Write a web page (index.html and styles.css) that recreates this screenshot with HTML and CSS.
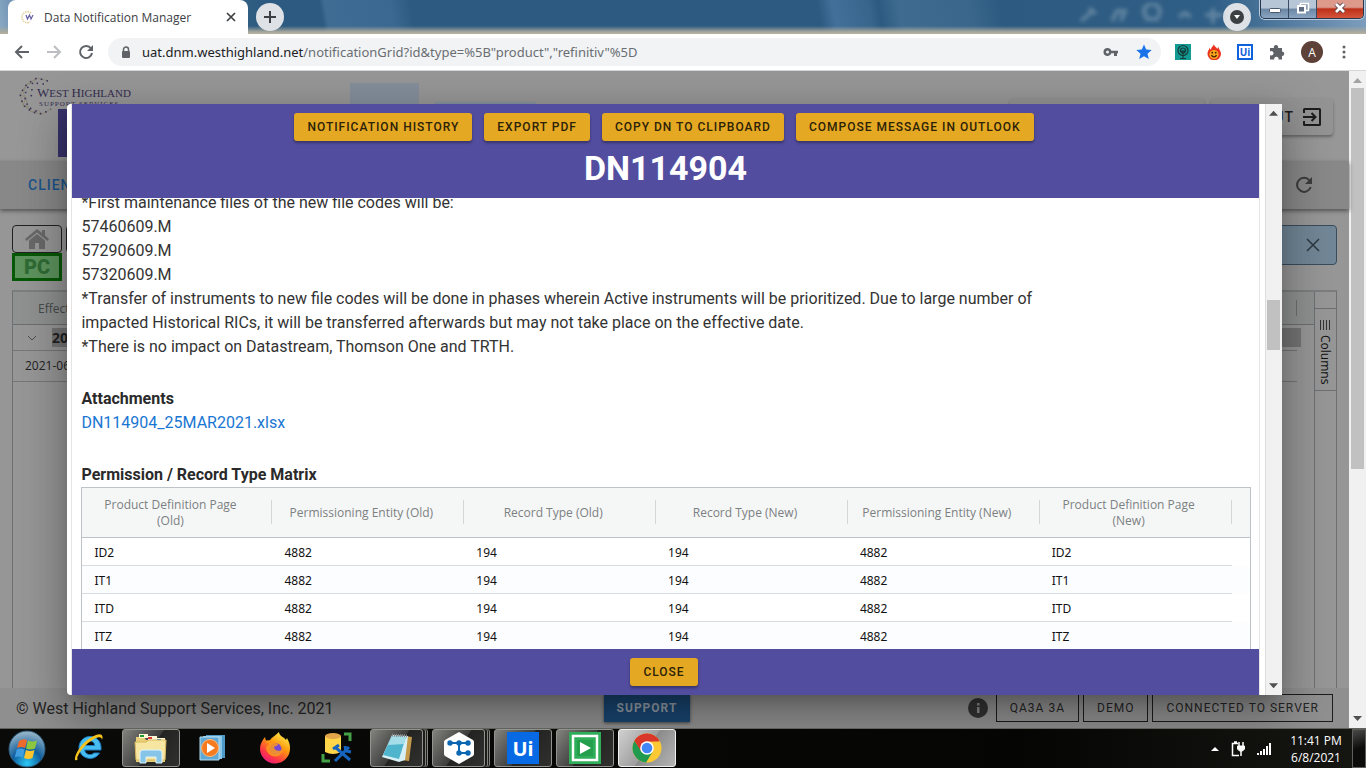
FILE: index.html
```
<!DOCTYPE html>
<html lang="en">
<head>
<meta charset="utf-8">
<title>Data Notification Manager</title>
<link rel="stylesheet" href="styles.css">
</head>
<body>
<header class="tabstrip">
  <div class="tab">
    <svg class="favicon" viewBox="0 0 16 16" width="16" height="16"><path d="M11 4A5.500 5.500 0 1 0 10 13" fill="none" stroke="#e3cf9b" stroke-width="1.600" stroke-dasharray="1.500 .8"/><path d="M6 6l1.500 4L9.500 6l1.500 4L13 6" fill="none" stroke="#6a62a8" stroke-width="1.200"/></svg>
    <span class="tab-title">Data Notification Manager</span>
    <button class="plain" aria-label="Close tab"><svg viewBox="0 0 10 10" width="10" height="10"><path d="M1 1l8 8M9 1l-8 8" stroke="#3c4043" stroke-width="1.7"/></svg></button>
  </div>
  <button class="round" aria-label="New tab"><svg viewBox="0 0 12 12" width="12" height="12"><path d="M6 0v12M0 6h12" stroke="#3c4043" stroke-width="2"/></svg></button>
  <svg class="glass-marks" viewBox="0 0 150 24" width="150" height="24" fill="none" stroke="#8aa5b8" stroke-width="4"><path d="M4 18L17 7M12 5l7 6M35 18l5-10h8l-4 10M66 6l4 10h12M69 14a8 8 0 1 1 12 0M102 14l6-4 6 4M136 5v16M128 12h18"/></svg>
  <button class="round" aria-label="Search tabs"><svg viewBox="0 0 14 14" width="14" height="14"><circle cx="7" cy="7" r="7" fill="#3c4043"/><path d="M4 5h6l-3 4z" fill="#fff"/></svg></button>
  <div class="window-controls">
    <button aria-label="Minimize"><svg viewBox="0 0 14 12" width="14" height="12"><rect x="1.500" y="6.500" width="11" height="4" rx="1" fill="#fff" stroke="#4a5870"/></svg></button>
    <button aria-label="Restore"><svg viewBox="0 0 14 12" width="14" height="12"><path d="M4.500 1.500h8v7h-8z" fill="#8ea0b4" stroke="#fff" stroke-width="1.500"/><path d="M2 4h7v6.500H2z" fill="#5d6c82" stroke="#fff" stroke-width="2"/></svg></button>
    <button class="win-close" aria-label="Close"><svg viewBox="0 0 14 12" width="14" height="12"><path d="M3 2l8 8M11 2l-8 8" stroke="#50384a" stroke-width="4.500"/><path d="M3 2l8 8M11 2l-8 8" stroke="#fff" stroke-width="2.800"/></svg></button>
  </div>
</header>

<nav class="toolbar">
  <button class="plain" aria-label="Back"><svg viewBox="0 0 16 16" width="16" height="16" fill="none" stroke="#5f6368" stroke-width="2"><path d="M15 8H2M8 2L2 8l6 6"/></svg></button>
  <button class="plain" aria-label="Forward"><svg viewBox="0 0 16 16" width="16" height="16" fill="none" stroke="#bcbec1" stroke-width="2"><path d="M1 8h13M8 2l6 6-6 6"/></svg></button>
  <button class="plain" aria-label="Reload"><svg viewBox="0 0 16 16" width="16" height="16"><path d="M13 4.500A6 6 0 1 0 14 9" fill="none" stroke="#5f6368" stroke-width="2"/><path d="M15 1v6H9z" fill="#5f6368"/></svg></button>
  <div class="omnibox">
    <svg viewBox="0 0 10 13" width="10" height="13"><path d="M2.500 6V3.500a2.500 2.500 0 0 1 5 0V6" fill="none" stroke="#5f6368" stroke-width="1.500"/><rect x="1" y="5" width="8" height="7" rx="1" fill="#5f6368"/></svg>
    <span class="url">uat.dnm.westhighland.net<span class="url-path">/notificationGrid?id&amp;type=%5B"product","refinitiv"%5D</span></span>
    <svg viewBox="0 0 16 10" width="16" height="10"><path d="M4.500 1a4 4 0 1 0 3.800 5.200H11V9h3V6.200h1V3.800H8.300A4 4 0 0 0 4.500 1zm0 2.500a1.500 1.500 0 1 1 0 3 1.500 1.500 0 0 1 0-3z" fill="#5f6368"/></svg>
    <svg viewBox="0 0 16 16" width="16" height="16"><path d="M8 .5l2.200 5.100 5.500.5-4.200 3.600 1.300 5.400L8 12.200l-4.800 2.900 1.300-5.400L.3 6.100l5.500-.5z" fill="#1a73e8"/></svg>
  </div>
  <svg viewBox="0 0 16 16" width="16" height="16"><path fill="#129a93" d="M0 0h16v16H0z"/><g fill="none" stroke="#143c3a" stroke-width="1.200"><circle cx="8" cy="6.500" r="5"/><circle cx="8" cy="6.500" r="2.500"/><path d="M8 6v8M5 14.500h6M8 9l3-3M8 9L5 6"/></g></svg>
  <svg viewBox="0 0 14 16" width="14" height="16"><path d="M7 0c0 3 3 3 3 5l1.500-2C12 6 14 7 14 10a6.500 6 0 0 1-13.500 0C.5 7 2 6 2.500 4L4 6C4 3 6 3 7 0z" fill="#e8321e"/><circle cx="7" cy="10.500" r="4.600" fill="#f7a81b"/><path d="M4.500 11a2.600 2.600 0 0 0 5 0" fill="none" stroke="#4a1c08" stroke-width="1.200"/><circle cx="5.300" cy="8.700" r=".9" fill="#4a1c08"/><circle cx="8.700" cy="8.700" r=".9" fill="#4a1c08"/></svg>
  <span class="ext-ui">Ui</span>
  <svg viewBox="0 0 16 16" width="16" height="16"><path d="M1 4h4a2.200 2.200 0 1 1 4 0h4v3.500a2.200 2.200 0 1 1 0 4.500v3.500H9.500a2.200 2.200 0 1 0-4.200 0H1V11a2.200 2.200 0 1 0 0-3.500z" fill="#5f6368"/></svg>
  <span class="avatar">A</span>
  <svg class="menu-dots" viewBox="0 0 4 14" width="4" height="14" fill="#5f6368"><circle cx="2" cy="2" r="1.500"/><circle cx="2" cy="7" r="1.500"/><circle cx="2" cy="12" r="1.500"/></svg>
</nav>

<div class="viewport">
  <div class="page">
    <header class="app-header">
      <div class="brand">
        <svg class="brand-globe" viewBox="0 0 40 40" width="40" height="40" fill="none"><g stroke="#857d66" stroke-width=".6"><path d="M31 5L20 2 10 8 3 18l3 11 9 7 10 2 9-5M20 2l-4 5-6 1-4 9 3 5-3 7 5 2 4 5 6-2 4 4M3 18l6 4 2 9"/></g><path d="M31 5L20 2 10 8 3 18l3 11 9 7 10 2 9-5M16 7l-7 6-1 9 3 9 10 5M27 8l-10-1M15 13l-1 9" stroke="#3d3557" stroke-width="1.600" stroke-dasharray="1.500 4.500"/></svg>
        <div class="brand-text"><span class="brand-name"><b>W</b>EST <b>H</b>IGHLAND</span><span class="brand-sub">SUPPORT SERVICES</span></div>
      </div>
      <div class="banner-purple"></div>
      <div class="banner-blue"></div>
      <div class="banner-line"></div>
      <button class="raised wide" aria-label="Account"></button>
      <button class="raised logout">LOGOUT<svg viewBox="0 0 20 20" width="20" height="20" fill="none" stroke="#1d1d1d" stroke-width="2"><path d="M2 6V2.500Q2 2 2.500 2h15q.5 0 .5.500v15q0 .5-.5.500h-15Q2 18 2 17.500V14M1 10h12M9.500 6l4 4-4 4"/></svg></button>
    </header>
    <nav class="app-nav">
      <a class="nav-link" href="#">CLIENT</a>
      <button class="plain" aria-label="Refresh"><svg viewBox="0 0 18 18" width="18" height="18"><path d="M14.500 4.500A7 7 0 1 0 15.700 11" fill="none" stroke="#3c3c3c" stroke-width="2"/><path d="M17 1v7h-7z" fill="#3c3c3c"/></svg></button>
    </nav>
    <main class="app-main">
      <div class="filters">
        <div class="filter-stack">
          <div class="filter-row">
            <button class="home" aria-label="Home"><svg viewBox="0 0 24 20" width="24" height="20" fill="#686868"><path d="M12 0L0 10l1.500 2L12 3.500 22.500 12l1.500-2-4-3.400V1h-3v3z"/><path d="M12 5L4 11.500V20h6v-6h4v6h6v-8.500z"/></svg></button>
            <button class="home" aria-label="Filter"></button>
          </div>
          <button class="pc">PC</button>
        </div>
        <div class="alert"><button class="plain" aria-label="Dismiss"><svg viewBox="0 0 14 14" width="14" height="14"><path d="M1 1l12 12M13 1L1 13" stroke="#2d3840" stroke-width="1.500"/></svg></button></div>
      </div>
      <div class="grid">
        <div class="grid-body">
          <div class="grid-head"><span>Effect</span><i></i></div>
          <div class="grid-group"><svg viewBox="0 0 10 6" width="10" height="6"><path d="M1 1l4 4 4-4" fill="none" stroke="#4d5052"/></svg><b>20</b></div>
          <div class="grid-row">2021-06</div>
        </div>
        <aside class="grid-side"><button class="columns-tab"><svg viewBox="0 0 12 10" width="12" height="10"><path d="M1.500 0v10M4.500 0v10M7.500 0v10M10.500 0v10" stroke="#333"/></svg><span>Columns</span></button></aside>
      </div>
    </main>
    <footer class="app-footer">
      <span class="copyright">© West Highland Support Services, Inc. 2021</span>
      <button class="support">SUPPORT</button>
      <div class="status">
        <svg viewBox="0 0 20 20" width="20" height="20"><circle cx="10" cy="10" r="10" fill="#333"/><path d="M9 9h2.500v6H9zM9 5h2.500v2.500H9z" fill="#8a8a8a"/></svg>
        <button>QA3A 3A</button><button>DEMO</button><button>CONNECTED TO SERVER</button>
      </div>
    </footer>
  </div>
  <div class="scrollbar page-scroll"><i class="up pale"></i><div class="thumb"></div><i class="down"></i></div>

  <div class="dialog-layer">
    <section class="dialog" role="dialog" aria-labelledby="dn-title">
      <div class="dialog-frame">
        <header class="dialog-head">
          <div class="actions">
            <button class="gold">NOTIFICATION HISTORY</button>
            <button class="gold">EXPORT PDF</button>
            <button class="gold">COPY DN TO CLIPBOARD</button>
            <button class="gold">COMPOSE MESSAGE IN OUTLOOK</button>
          </div>
          <h1 id="dn-title">DN114904</h1>
        </header>
        <div class="dialog-body">
          <div class="content">
            <p>*First maintenance files of the new file codes will be:<br>57460609.M<br>57290609.M<br>57320609.M<br>*Transfer of instruments to new file codes will be done in phases wherein Active instruments will be prioritized. Due to large number of impacted Historical RICs, it will be transferred afterwards but may not take place on the effective date.<br>*There is no impact on Datastream, Thomson One and TRTH.</p>
            <div><h2>Attachments</h2><a class="file" href="#">DN114904_25MAR2021.xlsx</a></div>
            <div>
              <h2>Permission / Record Type Matrix</h2>
              <table class="matrix">
                <thead><tr><th class="first">Product Definition Page (Old)</th><th>Permissioning Entity (Old)</th><th>Record Type (Old)</th><th>Record Type (New)</th><th>Permissioning Entity (New)</th><th>Product Definition Page (New)</th><th class="tail"></th></tr></thead>
                <tbody>
                  <tr><td>ID2</td><td>4882</td><td>194</td><td>194</td><td>4882</td><td>ID2</td><td></td></tr>
                  <tr><td>IT1</td><td>4882</td><td>194</td><td>194</td><td>4882</td><td>IT1</td><td></td></tr>
                  <tr><td>ITD</td><td>4882</td><td>194</td><td>194</td><td>4882</td><td>ITD</td><td></td></tr>
                  <tr><td>ITZ</td><td>4882</td><td>194</td><td>194</td><td>4882</td><td>ITZ</td><td></td></tr>
                </tbody>
              </table>
            </div>
          </div>
        </div>
        <footer class="dialog-foot"><button class="gold">CLOSE</button></footer>
      </div>
      <div class="scrollbar dialog-scroll"><i class="up"></i><div class="thumb"></div><i class="down"></i></div>
    </section>
  </div>
</div>

<footer class="taskbar">
  <button class="start" aria-label="Start"><svg viewBox="0 0 38 38" width="38" height="38"><defs><radialGradient id="orb" cx=".5" cy=".9" r=".9"><stop offset="0" stop-color="#2cc8f5"/><stop offset=".45" stop-color="#0f5f9e"/><stop offset="1" stop-color="#9fb9c9"/></radialGradient></defs><circle cx="19" cy="19" r="18" fill="url(#orb)" stroke="#2d5878"/><path d="M11 11q4-3 8-1l-2 8q-4-2-8 0z" fill="#ee6a2b"/><path d="M20 10.500q4 2 9 0l-2 8q-4 2-9 0z" fill="#8cc63e"/><path d="M8.700 19.500q4-2 8 0l-2 8q-4-2-8 0z" fill="#3f9de0"/><path d="M18 20q4 2 8.500 0l-2 8q-4 2-8.500 0z" fill="#fdc52b"/></svg></button>
  <button class="task" aria-label="Internet Explorer"><svg viewBox="0 0 32 32" width="32" height="32"><path d="M26.500 21A11 11 0 1 1 28 15v3H11.500a5.500 5.500 0 0 0 9.500 3zM11.500 13.500h10.300a5.200 5.200 0 0 0-10.300 0z" fill="#48bdf2" stroke="#1a7fc4"/><path d="M6 26C-1 34 1 20 12 10 22 1 32-1 29 8 29 3 22 5 14 12 5 20 2 30 6 26z" fill="#f8c21c"/></svg></button>
  <button class="task open" aria-label="Explorer"><svg viewBox="0 0 34 32" width="34" height="32"><path d="M2 5h8l2 3h19v22H2z" fill="#e8cf78"/><path d="M5 2h9v4H5zM14 4h9v4h-9zM23 6h8v4h-8z" fill="#fff7d5"/><path d="M6 3h4v2H6z" fill="#1b9a30"/><path d="M14 5h4v2h-4z" fill="#d33"/><path d="M23 7h4v2h-4z" fill="#2b7fd8"/><path d="M1 10h11l3-2h17l-1 20H2z" fill="#f7e6a1" stroke="#d9b85c"/><path d="M6 31V21q0-3 3-3h16q3 0 3 3v10h-6v-6H12v6z" fill="#86c5e8" stroke="#dff3fc"/></svg></button>
  <button class="task" aria-label="Media Player"><svg viewBox="0 0 28 28" width="28" height="28"><path d="M7 1h19v23H7z" fill="#4d9ac9"/><path d="M4 2h19v23H4z" fill="#8cc6e6"/><path d="M1 3h19v23H1z" fill="#5fa8d5" stroke="#b6def2"/><circle cx="11" cy="14" r="8.500" fill="#f47b20" stroke="#ffb877"/><path d="M8 9l8 5-8 5z" fill="#fff"/></svg></button>
  <button class="task" aria-label="Firefox"><svg viewBox="0 0 32 32" width="32" height="32"><defs><linearGradient id="fox" x1=".8" y1="0" x2=".2" y2="1"><stop offset="0" stop-color="#fff44f"/><stop offset=".4" stop-color="#ff980e"/><stop offset=".75" stop-color="#ff3647"/><stop offset="1" stop-color="#e31587"/></linearGradient></defs><path d="M20 0c0 4 5 5 7 8l1-2c2 4 3 6 3 10a15 15 0 0 1-30 1C1 12 3 9 6 5l1 4 4-1c2-3 5-4 9-8z" fill="url(#fox)"/><circle cx="16.500" cy="17" r="6" fill="#7646d6"/><path d="M6 9c3-1 6 0 8 2 3 0 5 0 5 2l-4 2c0 4 6 5 9 2-1 8-10 10-15 4-3-4-2-7 1-9z" fill="#ff9a1b" opacity=".85"/></svg></button>
  <button class="task" aria-label="Database Tools"><svg viewBox="0 0 32 32" width="32" height="32"><path d="M4 4v16q8 4 16 0V4z" fill="#ffd54a"/><ellipse cx="12" cy="4" rx="8" ry="3" fill="#e3a54a"/><path d="M23 2h6v7M2 22v7h7" fill="none" stroke="#43a047" stroke-width="3"/><path d="M14 15l15 13M28 15L14 29" stroke="#1565c0" stroke-width="3"/><path d="M12 17l6-4M24 14l1 5 5 1" fill="none" stroke="#1565c0" stroke-width="3"/></svg></button>
  <button class="task open stacked" aria-label="Notepad"><svg viewBox="0 0 32 32" width="32" height="32"><path d="M24 4l7 1-3 24-8-1z" fill="#c49a4a"/><path d="M11 3l16 1-3 24-6 2L1 25z" fill="#d7f0f5"/><path d="M11 4l14 1-7 22L2 23z" fill="#4fb5cd"/><path d="M11 4l14 1-2 7L7 13z" fill="#a5dde8"/><path d="M11 3l16 1" stroke="#888" stroke-width="3" stroke-dasharray="1 1"/></svg></button>
  <button class="task open stacked" aria-label="Orchestrator"><svg viewBox="0 0 32 32" width="32" height="32"><path d="M16 0l14 8q1 1 1 2v12q0 1-1 2l-14 8-14-8q-1-1-1-2V10q0-1 1-2z" fill="#fff"/><path d="M7 11h18M16 11v10h9" fill="none" stroke="#0b67b2" stroke-width="2"/><g fill="#0b67b2"><circle cx="7" cy="11" r="2.700"/><circle cx="16" cy="11" r="2.700"/><circle cx="25" cy="11" r="2.700"/><circle cx="16" cy="21" r="2.700"/><circle cx="25" cy="21" r="2.700"/></g></svg></button>
  <button class="task open" aria-label="UiPath Studio"><span class="ui-tile">Ui</span></button>
  <button class="task open" aria-label="Runner"><svg viewBox="0 0 32 32" width="32" height="32"><path d="M0 0h32v32H0z" fill="#2fae5a"/><path d="M4 4h24v24H4z" fill="none" stroke="#fff" stroke-width="2.500"/><path d="M8 8h16v16H8z" fill="#24a04d"/><path d="M11 10l11 6-11 6z" fill="#fff"/></svg></button>
  <button class="task open active" aria-label="Chrome"><svg viewBox="0 0 32 32" width="30" height="30"><circle cx="16" cy="16" r="15.500" fill="#fcc934"/><path d="M2.600 8.200A15.500 15.500 0 0 1 29.400 8.200L16 9z" fill="#d9372a"/><path d="M2.600 8.200A15.500 15.500 0 0 0 15 31.500L22 20 10 19z" fill="#1f9a4e"/><path d="M2.600 8.200L10 20l6-11h13.400A15.500 15.500 0 0 0 2.600 8.200z" fill="#d9372a"/><circle cx="16" cy="16" r="7.300" fill="#fff"/><circle cx="16" cy="16" r="5.700" fill="#4285f4"/></svg></button>
  <div class="tray">
    <svg viewBox="0 0 8 4" width="8" height="4"><path d="M0 4l4-4 4 4z" fill="#fff"/></svg>
    <svg viewBox="0 0 14 16" width="14" height="16" fill="none" stroke="#fff"><path d="M7 2.500H1.500v12H8M3 1h3" stroke-width="1.500"/><path d="M8 1v4M12 1v4M10 10v5" stroke-width="1.500"/><path d="M6.500 5H13.500v3l-2 2h-3l-2-2z" fill="#fff"/></svg>
    <svg viewBox="0 0 15 12" width="15" height="12" fill="#fff"><path d="M0 10h2v2H0zM3 8h2v4H3zM6 6h2v6H6zM9 3h2v9H9zM12 0h2v12h-2z"/></svg>
    <time class="clock">11:41 PM<br>6/8/2021</time>
  </div>
  <button class="show-desktop" aria-label="Show desktop"></button>
</footer>
</body>
</html>
```
FILE: styles.css
```
* { box-sizing: border-box; }
html, body { height: 100%; }
body { margin: 0; display: flex; flex-direction: column; overflow: hidden; font-family: Roboto, sans-serif; background: #fff; }
button { font: inherit; color: inherit; border: 0; padding: 0; margin: 0; background: none; }
svg { display: block; flex: none; }
a { text-decoration: none; }
.plain { display: grid; place-items: center; flex: none; }

/* browser chrome */
.tabstrip { display: flex; align-items: flex-start; flex: none; height: 34px; padding: 0 2px 0 8px; font-family: "Open Sans", sans-serif;
  background: linear-gradient(180deg, transparent 26px, #a9a99c 32px, #b5b1a2 34px), linear-gradient(80deg, #8aa9c4 0, #6d90b0 20px, #2d5a80 260px, #2d5a80 320px, #3f6c93 325px, #3b6890 390px, #2d5a80 410px, #2d5a80 810px, #42709a 825px, #38658b 860px, #2d5a80 870px, #3f6b91 890px, #3a668c 960px, #2d5a80 990px, #2f5e86 1200px, #86a5c4 1366px); }
.tab { display: flex; align-items: center; gap: 8px; width: 240px; height: 34px; padding: 0 12px; background: #fff; border-radius: 8px 8px 0 0; }
.tab-title { flex: 1; font-size: 12px; color: #3c4043; white-space: nowrap; }
.round { display: grid; place-items: center; flex: none; width: 28px; height: 28px; margin: 3px 0 0 8px; border-radius: 50%; background: #dee1e6; }
.glass-marks { margin: 3px 0 0 auto; opacity: .55; filter: blur(2px); }
.glass-marks + .round { margin-left: -4px; }
.window-controls { display: flex; height: 19px; margin-left: 9px; border: 1px solid #26384f; border-top: 0; border-radius: 0 0 5px 5px; overflow: hidden; box-shadow: 0 0 0 1px #b9cbdc; }
.window-controls button { display: grid; place-items: center; width: 28px; padding-bottom: 2px; background: linear-gradient(#b7c6d6 45%, #6b86a4 50%, #8ba6c2); border-right: 1px solid #3a4c62; }
.window-controls .win-close { width: 46px; border: 0; background: linear-gradient(#dd9a8b 40%, #bd3018 50%, #d4553c); }
.toolbar { display: flex; align-items: center; flex: none; gap: 16px; height: 37px; padding: 0 20px 0 14px; border-bottom: 1px solid #d5d7da; background: #fff; font-family: "Open Sans", sans-serif; }
.omnibox { display: flex; align-items: center; flex: 1; gap: 11px; height: 28px; margin: 0 -2px; padding: 0 9px 0 13px; border-radius: 14px; background: #f1f3f4; }
.omnibox > svg:nth-of-type(3) { margin-left: 6px; }
.url { flex: 1; font-family: "Noto Sans", sans-serif; font-size: 13px; color: #202124; white-space: nowrap; overflow: hidden; }
.url-path { color: #6a6e73; }
.ext-ui { display: grid; place-items: center; width: 16px; height: 16px; border: 2px solid #0d62dc; background: #fff; color: #0d62dc; font-size: 10px; font-weight: 700; line-height: 12px; }
.avatar { display: grid; place-items: center; width: 22px; height: 22px; border-radius: 50%; background: #5d4037; color: #fff; font-size: 12px; }
.menu-dots { margin-left: 3px; }

/* dimmed page behind the dialog */
.viewport { position: relative; display: flex; flex: 1; min-height: 0; overflow: hidden; }
.page { display: flex; flex-direction: column; flex: 1; min-width: 0; background: #969696; }
.app-header { display: flex; align-items: flex-start; flex: none; height: 90px; padding-right: 16px; overflow: hidden; background: #979797; }
.brand { display: flex; width: 134px; padding: 5px 0 0 17px; }
.brand-text { display: flex; flex-direction: column; margin: 10px 0 0 -20px; font-family: "Liberation Serif", serif; color: #342d4f; white-space: nowrap; }
.brand-name { font-size: 11px; line-height: 14px; }
.brand-name b { font-size: 13px; font-weight: 400; }
.brand-sub { font-size: 7px; line-height: 8px; letter-spacing: 1px; padding-left: 2px; }
.banner-purple { width: 70px; height: 48px; margin: 38px 0 0 -76px; background: #37326b; }
.banner-blue { width: 69px; height: 60px; margin: 12px 0 0 222px; background: #848f9b; }
.banner-line { width: 104px; height: 30px; margin: 31px 0 0 14px; background: #84919c; border-radius: 4px; }
.raised { display: flex; align-items: center; justify-content: flex-end; height: 37px; margin-top: 27px; border-radius: 4px; background: #939393; box-shadow: 0 2px 3px #666; font-size: 14px; font-weight: 500; letter-spacing: 1px; color: #1d1d1d; }
.wide { width: 194px; margin-left: auto; margin-right: 7px; }
.logout { width: 122px; gap: 8px; padding-right: 11px; }
.app-nav { position: relative; display: flex; align-items: center; justify-content: space-between; flex: none; height: 48px; padding: 0 36px 0 28px; background: #888; box-shadow: 0 2px 4px #555; }
.nav-link { color: #1c548a; font-size: 14px; font-weight: 500; letter-spacing: 1px; }
.app-main { display: flex; flex-direction: column; flex: 1; gap: 9px; min-height: 0; padding: 16px 12px 0; }
.filters { display: flex; justify-content: space-between; }
.filter-row { display: flex; gap: 4px; }
.home { display: grid; place-items: center; width: 50px; height: 28px; border: 1px solid #222; border-radius: 4px; }
.pc { width: 50px; height: 28px; border: 3px solid #075807; background: #5d935d; color: #2f6b35; font-size: 20px; font-weight: 900; line-height: 22px; }
.alert { display: flex; align-items: center; justify-content: flex-end; width: 50%; height: 40px; padding-right: 16px; border: 1px solid #394c5c; border-radius: 4px; background: #718696; }
.grid { display: flex; flex: 1; border: 1px solid #6d7072; border-top: 2px solid #7b7d7e; border-bottom: 0; font-family: "Open Sans", sans-serif; font-size: 12px; color: #222; }
.grid-body { flex: 1; }
.grid-head { display: flex; align-items: center; justify-content: space-between; height: 33px; padding: 0 17px 0 25px; border-bottom: 1px solid #6a6e70; background: #8e9190; color: #464a4a; }
.grid-head i { width: 1px; height: 16px; background: #6d7070; }
.grid-group { display: flex; align-items: center; gap: 15px; height: 26px; margin-right: 17px; padding-left: 14px; border-bottom: 1px solid #747678; font-size: 14px; }
.grid-group b { flex: 1; margin-right: -4px; line-height: 19px; background: #747474; }
.grid-row { height: 31px; margin-right: 17px; padding-left: 12px; line-height: 30px; border-bottom: 1px solid #747678; }
.grid-side { width: 22px; padding-top: 16px; border-left: 1px solid #6d7072; }
.columns-tab { display: flex; flex-direction: column; align-items: center; gap: 5px; width: 100%; height: 83px; padding: 11px 2px 0 0; border: solid #6d7072; border-width: 1px 0; color: #111; }
.columns-tab span { writing-mode: vertical-rl; line-height: 14px; }
.app-footer { display: grid; grid-template-columns: 1fr auto 1fr; align-items: center; flex: none; height: 40px; padding: 0 16px; background: #8f8f8f; color: #252525; }
.copyright { font-size: 16px; white-space: nowrap; }
.support { width: 86px; height: 28px; margin-right: 55px; background: #19456f; color: #8f9aa5; font-size: 12px; font-weight: 700; letter-spacing: 1px; box-shadow: 0 1px 3px #444; }
.status { display: flex; align-items: center; justify-content: flex-end; gap: 4px; white-space: nowrap; font-size: 12px; }
.status svg { margin-right: 4px; }
.status button { height: 28px; padding: 0 13px; border: 1px solid #1c1c1c; letter-spacing: 1px; }

.scrollbar { display: flex; flex-direction: column; align-items: center; flex: none; width: 17px; background: #f1f1f1; }
.scrollbar i { flex: none; width: 9px; height: 5px; background: #505050; }
.scrollbar .up { margin-top: 7px; clip-path: polygon(50% 0, 100% 100%, 0 100%); }
.scrollbar .down { margin: auto 0 7px; clip-path: polygon(0 0, 100% 0, 50% 100%); }
.scrollbar .pale { background: #a3a3a3; }
.thumb { width: 13px; background: #c1c1c1; }
.page-scroll .thumb { height: 58%; margin-top: 5px; }
.dialog-scroll .thumb { height: 50px; margin-top: 184px; }

/* dialog */
.dialog-layer { position: absolute; inset: 0 17px 0 0; z-index: 2; display: grid; place-items: center; overflow: hidden; }
.dialog { display: flex; width: 90%; height: 90%; border-radius: 4px 0 0 4px; background: #fff; overflow: hidden; box-shadow: 0 11px 15px -7px rgba(0,0,0,.2), 0 24px 38px 3px rgba(0,0,0,.16), 0 9px 46px 8px rgba(0,0,0,.16); }
.dialog-frame { display: flex; flex-direction: column; flex: 1; min-width: 0; margin: 0 5px 0 4px; border: solid #e4e4e4; border-width: 0 1px; }
.dialog-scroll { border-left: 1px solid #dcdcdc; }
.dialog-head { flex: none; height: 94px; padding-top: 9px; background: #534da0; text-align: center; }
.actions { display: flex; justify-content: center; gap: 12px; padding-right: 3px; }
.gold { height: 28px; padding: 0 13px; border-radius: 3px; background: #e5a823; color: #2c2208; font-size: 12px; font-weight: 500; letter-spacing: 1px; white-space: nowrap; box-shadow: 0 2px 3px rgba(0,0,0,.35); }
h1 { margin: 7px 0 0; font-size: 34px; line-height: 40px; font-weight: 700; color: #fff; }
.dialog-body { flex: 1; min-height: 0; overflow: hidden; }
.content { display: flex; flex-direction: column; gap: 28px; margin: -7px 8px 0 9px; font-size: 16px; line-height: 24px; color: #333; }
.content p { margin: 0; max-width: 974px; }
h2 { margin: 0; font-size: 16px; line-height: 24px; font-weight: 700; color: #2a2a2a; }
.file { display: block; color: #1976d2; }
.matrix { width: 100%; border-collapse: separate; border-spacing: 0; table-layout: fixed; border: 1px solid #bdc3c7; font-family: "Noto Sans", sans-serif; font-size: 12px; line-height: 16px; color: #111; }
.matrix th { height: 50px; padding: 1px 22px 0 8px; background: linear-gradient(#d3d7d9, #d3d7d9) right / 1px 24px no-repeat #f5f7f7; border-bottom: 1px solid #bdc3c7; font-family: "Open Sans", sans-serif; font-weight: 400; color: #7c8081; }
.matrix .first { width: 190px; }
.matrix .tail { width: 18px; padding: 0; background: #f5f7f7; }
.matrix td { height: 28px; padding: 3px 12px 0; border-bottom: 1px solid #d9dcde; }
.matrix td:last-child { border-bottom: 0; padding: 0; }
.matrix tr:nth-child(even) td { background: #fcfdfe; }
.dialog-foot { display: grid; place-items: center; flex: none; height: 46px; padding-right: 3px; background: #534da0; }

/* taskbar */
.taskbar { display: flex; align-items: stretch; flex: none; gap: 4px; height: 40px; border-top: 1px solid #5d625b; background: linear-gradient(90deg, #0a0a08, #050503 75%, #161613); }
.start { display: grid; place-items: center; width: 56px; padding-right: 2px; }
.task { display: grid; place-items: center; width: 58px; margin-bottom: 1px; border: 1px solid transparent; border-radius: 3px; overflow: hidden; }
.open { border-color: #93938f; background: linear-gradient(125deg, #82827f, #3c3c3a 50%, #232321 51%, #30302e); }
.stacked { margin-right: 5px; width: 53px; box-shadow: 2px 0 #1b1b1a, 3px 0 #85857f, 4px 0 #1b1b1a, 5px 0 #85857f; }
.active { border-color: #f0f0f0; background: linear-gradient(125deg, #d0d0d0, #9e9e9e 50%, #8b8b8b 51%, #b5b5b5); }
.ui-tile { display: grid; place-items: center; width: 32px; height: 32px; background: #0869e4; color: #fff; font: 700 20px "Noto Sans", sans-serif; }
.tray { display: flex; align-items: center; gap: 12px; margin-left: auto; color: #fff; font-family: "Open Sans", sans-serif; font-size: 12px; line-height: 17px; text-align: center; }
.clock { width: 64px; }
.show-desktop { width: 14px; border: 1px solid #5f5f5b; background: linear-gradient(160deg, #4a4a48, #0c0c0a 50%); }
```
